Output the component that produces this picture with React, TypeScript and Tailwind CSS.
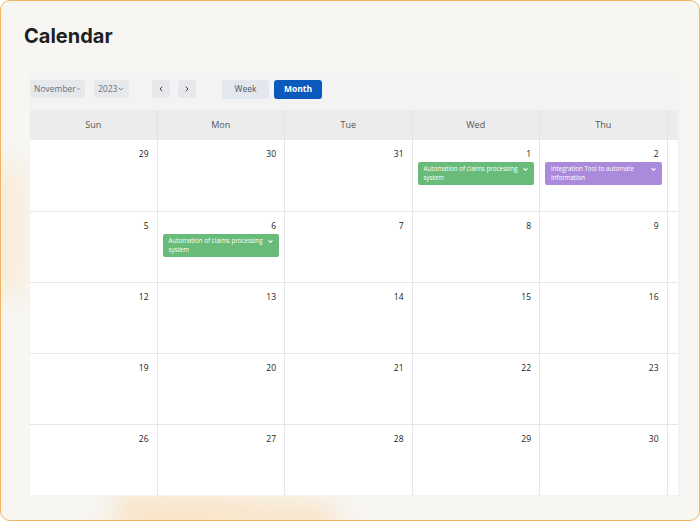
import { ChevronDown, ChevronLeft, ChevronRight } from "lucide-react";

type CalEvent = { title: string; color: string };

// only the visible part of the week is drawn, the sixth column is clipped
const days = ["Sun", "Mon", "Tue", "Wed", "Thu", ""];

const weeks: number[][] = [
  [29, 30, 31, 1, 2],
  [5, 6, 7, 8, 9],
  [12, 13, 14, 15, 16],
  [19, 20, 21, 22, 23],
  [26, 27, 28, 29, 30],
];

const events: Record<string, CalEvent> = {
  "0-3": { title: "Automation of claims processing system", color: "bg-[#68bb78]" },
  "0-4": { title: "Integration Tool to automate information", color: "bg-[#a98adb]" },
  "1-1": { title: "Automation of claims processing system", color: "bg-[#68bb78]" },
};

function EventChip({ ev }: { ev: CalEvent }) {
  return (
    <div className={`mx-[5px] mt-[2px] flex h-[23px] items-start justify-between rounded-[2px] pl-[6px] pr-[5px] pt-[3px] text-white ${ev.color}`}>
      <span className="w-[100px] text-[6.2px] leading-[8.5px]">{ev.title}</span>
      <ChevronDown className="mt-[1px] h-[7px] w-[7px]" strokeWidth={3.5} />
    </div>
  );
}

export default function App() {
  return (
    <div className="relative h-[521px] w-[700px] overflow-hidden rounded-[10px] border border-[#f0b561] bg-[#f7f6f2] font-['Open_Sans',sans-serif]">
      <div className="pointer-events-none absolute left-[-30px] top-[160px] h-[140px] w-[55px] rounded-full bg-[#fbe4c4] opacity-50 blur-[14px]" />
      <div className="pointer-events-none absolute bottom-[-30px] left-[110px] h-[55px] w-[230px] rotate-[4deg] rounded-full bg-[#fbdab0] opacity-60 blur-[14px]" />

      <div className="relative px-[23px] pt-[23px]">
        <h1 className="font-['Inter',sans-serif] text-[20px] font-bold leading-[24px] text-[#1f1f1f]">Calendar</h1>
      </div>

      <div className="relative ml-[28px] mt-[25px] w-[651px] bg-[#f3f3f3]">
        <div className="flex h-[37px] items-start pl-[1px] pt-[7px] text-[8.5px]">
          <div className="flex h-[18px] w-[55px] items-center justify-between rounded-[3px] bg-[#e6e8ec] pl-[4px] pr-[4px] text-[#6a7080]">
            <span>November</span>
            <ChevronDown className="h-[8px] w-[8px]" strokeWidth={3} />
          </div>
          <div className="ml-[9px] flex h-[18px] w-[35px] items-center justify-between rounded-[3px] bg-[#e6e8ec] pl-[4px] pr-[4px] text-[#6a7080]">
            <span>2023</span>
            <ChevronDown className="h-[8px] w-[8px]" strokeWidth={3} />
          </div>
          <button className="ml-[23px] flex h-[18px] w-[18px] items-center justify-center rounded-[3px] bg-[#e6e8ec] text-[#3a3f4a]">
            <ChevronLeft className="h-[8px] w-[8px]" strokeWidth={3} />
          </button>
          <button className="ml-[8px] flex h-[18px] w-[18px] items-center justify-center rounded-[3px] bg-[#e6e8ec] text-[#3a3f4a]">
            <ChevronRight className="h-[8px] w-[8px]" strokeWidth={3} />
          </button>
          <button className="ml-[26px] h-[19px] w-[47px] rounded-[3px] bg-[#e3e8ef] text-[#4d5360]">Week</button>
          <button className="ml-[5px] h-[19px] w-[48px] rounded-[3px] bg-[#0a59bd] font-bold text-white">Month</button>
        </div>

        <div className="ml-[1px] w-[648px] overflow-hidden pb-[1px]">
          <div className="grid w-[765px] grid-cols-[repeat(6,127.5px)]">
            {days.map((d, i) => (
              <div key={i} className="flex h-[30px] items-center justify-center border-r border-[#e2e2e2] bg-[#ececec] text-[9px] text-[#555]">
                {d}
              </div>
            ))}
            {weeks.map((week, wi) => [
              ...week.map((n, di) => {
                const ev = events[`${wi}-${di}`];
                return (
                  <div key={`${wi}-${di}`} className={`h-[71px] border-r border-[#e6e6e6] bg-white ${wi > 0 ? "border-t" : ""}`}>
                    <div className="pr-[8px] pt-[8px] text-right text-[8.5px] leading-[12px] text-[#222]">{n}</div>
                    {ev && <EventChip ev={ev} />}
                  </div>
                );
              }),
              <div key={`${wi}-x`} className={`h-[71px] border-r border-[#e6e6e6] bg-white ${wi > 0 ? "border-t" : ""}`} />,
            ])}
          </div>
        </div>
      </div>
    </div>
  );
}
